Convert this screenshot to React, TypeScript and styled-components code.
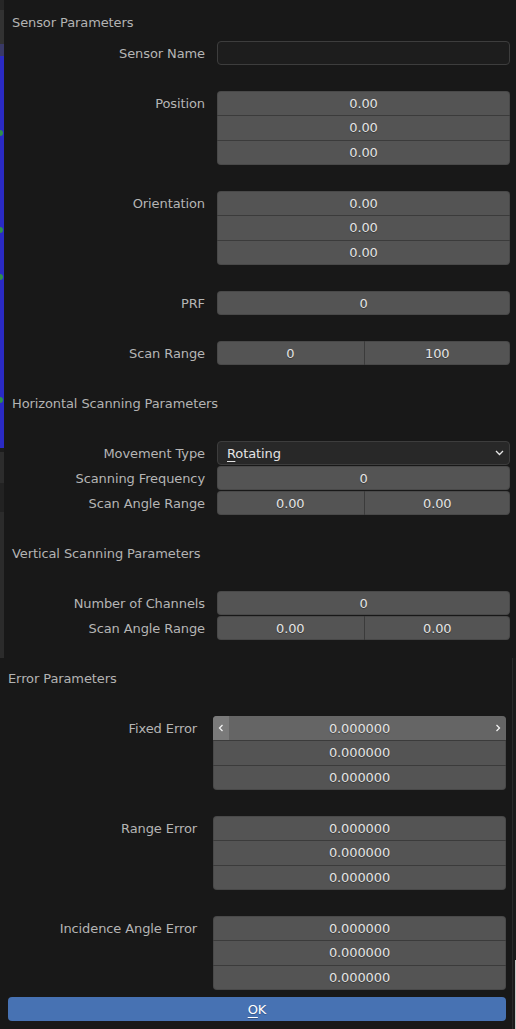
import React from 'react';
import styled, { createGlobalStyle } from 'styled-components';

const GlobalStyle = createGlobalStyle`
  html, body { margin: 0; padding: 0; background: #181818; }
  body {
    font-family: "DejaVu Sans", "Liberation Sans", sans-serif;
    font-size: 13px;
    letter-spacing: -0.1px;
  }
  * { box-sizing: border-box; }
`;

const Page = styled.div`
  width: 516px;
  height: 1029px;
  overflow: hidden;
  display: flex;
  flex-direction: column;
  background: #181818;
`;

const Area = styled.div<{ $h: number }>`
  display: flex;
  flex: none;
  height: ${(p) => p.$h}px;
  overflow: hidden;
`;

const Backdrop = styled.div`
  width: 4px;
  flex: none;
  display: flex;
  flex-direction: column;
`;

const Band = styled.div<{ $h?: number; $c: string }>`
  flex: ${(p) => (p.$h ? 'none' : '1')};
  height: ${(p) => (p.$h ? `${p.$h}px` : 'auto')};
  background: ${(p) => p.$c};
  position: relative;
`;

const Marker = styled.div<{ $top: number; $c: string }>`
  position: absolute;
  left: 0;
  top: ${(p) => p.$top}px;
  width: 3px;
  height: 6px;
  border-radius: 0 3px 3px 0;
  background: ${(p) => p.$c};
`;

const EdgeStrip = styled.div`
  width: 4px;
  flex: none;
  display: flex;
  flex-direction: column;
  background: #1a1a1a;
  border-left: 1px solid #2a2a2a;
`;

const EdgeBand = styled.div<{ $h?: number; $light?: boolean }>`
  flex: ${(p) => (p.$h ? 'none' : '1')};
  height: ${(p) => (p.$h ? `${p.$h}px` : 'auto')};
  border-right: 1px solid ${(p) => (p.$light ? '#c8c8c8' : 'transparent')};
`;

const Dialog = styled.div<{ $padTop: number }>`
  width: 512px;
  flex: none;
  background: #181818;
  padding: ${(p) => p.$padTop}px 6px 8px 0;
  color: #b5b5b5;
`;

const SectionHeader = styled.div<{ $space?: number }>`
  height: 25px;
  line-height: 25px;
  padding-left: 8px;
  margin-top: ${(p) => p.$space ?? 0}px;
  color: #b3b3b3;
  white-space: nowrap;
`;

const PropRow = styled.div<{ $space?: number }>`
  display: grid;
  grid-template-columns: 213px 1fr;
  margin-top: ${(p) => p.$space ?? 0}px;
`;

const Label = styled.div<{ $gap: number }>`
  text-align: right;
  padding-right: ${(p) => p.$gap}px;
  height: 25px;
  line-height: 25px;
  white-space: nowrap;
  color: #b5b5b5;
`;

const Fields = styled.div`
  display: flex;
  flex-direction: column;
`;

const Stack = styled.div`
  border-radius: 4px;
  overflow: hidden;
  background: #545454;
  margin-bottom: 1px;
  box-shadow: inset 0 0 0 1px rgba(0, 0, 0, 0.12);
`;

const Cell = styled.div<{ $hover?: boolean }>`
  position: relative;
  height: 24px;
  line-height: 26px;
  text-align: center;
  color: #e4e4e4;
  text-shadow: 0 1px 1px rgba(0, 0, 0, 0.35);
  background: ${(p) => (p.$hover ? '#656565' : 'transparent')};
  & + & {
    height: 25px;
    line-height: 24px;
    border-top: 1px solid #3b3b3b;
  }
`;

const Split = styled.div`
  display: grid;
  grid-template-columns: 1fr 1fr;
  height: 24px;
`;

const SplitPart = styled.div`
  line-height: 26px;
  text-align: center;
  color: #e4e4e4;
  text-shadow: 0 1px 1px rgba(0, 0, 0, 0.35);
  & + & {
    border-left: 1px solid #3b3b3b;
  }
`;

const TextInput = styled.div`
  height: 24px;
  margin-bottom: 1px;
  border: 1px solid #3d3d3d;
  border-radius: 4px;
  background: #1d1d1d;
`;

const Menu = styled.div`
  height: 24px;
  margin-bottom: 1px;
  border: 1px solid #3d3d3d;
  border-radius: 4px;
  background: #282828;
  display: flex;
  align-items: center;
  justify-content: space-between;
  padding: 0 5px 0 9px;
  color: #e4e4e4;
`;

const Key = styled.span`
  text-decoration: underline;
  text-underline-offset: 3px;
  text-decoration-thickness: 1px;
`;

const ArrowZone = styled.div`
  position: absolute;
  left: 0;
  top: 0;
  bottom: 0;
  width: 16px;
  background: #7a7a7a;
  display: flex;
  align-items: center;
  justify-content: center;
`;

const ArrowRight = styled.div`
  position: absolute;
  right: 4px;
  top: 0;
  bottom: 0;
  width: 8px;
  display: flex;
  align-items: center;
  justify-content: center;
`;

const OkButton = styled.div`
  margin: 6px 0 0 8px;
  height: 24px;
  line-height: 26px;
  border-radius: 4px;
  background: #4772b3;
  color: #ffffff;
  text-align: center;
  text-shadow: 0 1px 1px rgba(0, 0, 0, 0.25);
`;

const Chevron = ({ dir }: { dir: 'left' | 'right' | 'down' }) => {
  if (dir === 'down') {
    return (
      <svg width="9" height="6" viewBox="0 0 9 6">
        <polyline points="1,1 4.5,4.5 8,1" fill="none" stroke="#e6e6e6" strokeWidth="1.3" />
      </svg>
    );
  }
  const pts = dir === 'left' ? '4.5,1 1.5,4 4.5,7' : '1.5,1 4.5,4 1.5,7';
  return (
    <svg width="6" height="8" viewBox="0 0 6 8">
      <polyline points={pts} fill="none" stroke="#f2f2f2" strokeWidth="1.3" />
    </svg>
  );
};

const Vector = ({ values, hoverFirst }: { values: string[]; hoverFirst?: boolean }) => (
  <Stack>
    {values.map((v, i) => (
      <Cell key={i} $hover={hoverFirst && i === 0}>
        {hoverFirst && i === 0 && (
          <>
            <ArrowZone>
              <Chevron dir="left" />
            </ArrowZone>
            <ArrowRight>
              <Chevron dir="right" />
            </ArrowRight>
          </>
        )}
        {v}
      </Cell>
    ))}
  </Stack>
);

const Single = ({ value }: { value: string }) => (
  <Stack>
    <Cell>{value}</Cell>
  </Stack>
);

const Pair = ({ a, b }: { a: string; b: string }) => (
  <Stack>
    <Split>
      <SplitPart>{a}</SplitPart>
      <SplitPart>{b}</SplitPart>
    </Split>
  </Stack>
);

export default function App() {
  const z2 = ['0.00', '0.00', '0.00'];
  const z6 = ['0.000000', '0.000000', '0.000000'];
  return (
    <>
      <GlobalStyle />
      <Page>
        <Area $h={658}>
          <Backdrop>
            <Band $h={10} $c="#262626" />
            <Band $h={34} $c="#323232" />
            <Band $h={12} $c="#393966" />
            <Band $h={392} $c="#2a2ac4">
              <Marker $top={74} $c="#2f8f4a" />
              <Marker $top={171} $c="#2f8f4a" />
              <Marker $top={218} $c="#2f8f4a" />
              <Marker $top={341} $c="#2f8f4a" />
            </Band>
            <Band $h={4} $c="#1c1c1c" />
            <Band $h={31} $c="#2c2c2c" />
            <Band $h={29} $c="#222222" />
            <Band $c="#2b2b2b" />
          </Backdrop>
          <Dialog $padTop={10}>
            <SectionHeader>Sensor Parameters</SectionHeader>
            <PropRow $space={6}>
              <Label $gap={12}>Sensor Name</Label>
              <Fields>
                <TextInput />
              </Fields>
            </PropRow>
            <PropRow $space={25}>
              <Label $gap={12}>Position</Label>
              <Fields>
                <Vector values={z2} />
              </Fields>
            </PropRow>
            <PropRow $space={25}>
              <Label $gap={12}>Orientation</Label>
              <Fields>
                <Vector values={z2} />
              </Fields>
            </PropRow>
            <PropRow $space={25}>
              <Label $gap={12}>PRF</Label>
              <Fields>
                <Single value="0" />
              </Fields>
            </PropRow>
            <PropRow $space={25}>
              <Label $gap={12}>Scan Range</Label>
              <Fields>
                <Pair a="0" b="100" />
              </Fields>
            </PropRow>
            <SectionHeader $space={25}>Horizontal Scanning Parameters</SectionHeader>
            <PropRow $space={25}>
              <Label $gap={12}>Movement Type</Label>
              <Fields>
                <Menu>
                  <span>
                    <Key>R</Key>otating
                  </span>
                  <Chevron dir="down" />
                </Menu>
              </Fields>
            </PropRow>
            <PropRow>
              <Label $gap={12}>Scanning Frequency</Label>
              <Fields>
                <Single value="0" />
              </Fields>
            </PropRow>
            <PropRow>
              <Label $gap={12}>Scan Angle Range</Label>
              <Fields>
                <Pair a="0.00" b="0.00" />
              </Fields>
            </PropRow>
            <SectionHeader $space={25}>Vertical Scanning Parameters</SectionHeader>
            <PropRow $space={25}>
              <Label $gap={12}>Number of Channels</Label>
              <Fields>
                <Single value="0" />
              </Fields>
            </PropRow>
            <PropRow>
              <Label $gap={12}>Scan Angle Range</Label>
              <Fields>
                <Pair a="0.00" b="0.00" />
              </Fields>
            </PropRow>
          </Dialog>
        </Area>
        <Area $h={371}>
          <Dialog $padTop={8}>
            <SectionHeader>Error Parameters</SectionHeader>
            <PropRow $space={25}>
              <Label $gap={16}>Fixed Error</Label>
              <Fields>
                <Vector values={z6} hoverFirst />
              </Fields>
            </PropRow>
            <PropRow $space={25}>
              <Label $gap={16}>Range Error</Label>
              <Fields>
                <Vector values={z6} />
              </Fields>
            </PropRow>
            <PropRow $space={25}>
              <Label $gap={16}>Incidence Angle Error</Label>
              <Fields>
                <Vector values={z6} />
              </Fields>
            </PropRow>
            <OkButton>
              <Key>O</Key>K
            </OkButton>
          </Dialog>
          <EdgeStrip>
            <EdgeBand $h={302} />
            <EdgeBand $light />
          </EdgeStrip>
        </Area>
      </Page>
    </>
  );
}
